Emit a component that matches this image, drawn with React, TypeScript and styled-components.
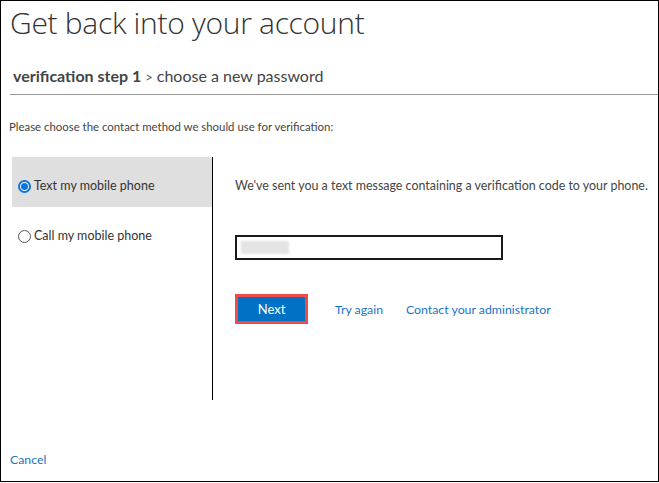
import React from "react";
import styled, { createGlobalStyle } from "styled-components";

const Global = createGlobalStyle`
  html, body { margin: 0; padding: 0; background: #fff; }
  body { font-family: Lato, "Open Sans", Arial, sans-serif; color: #333; }
`;

const Frame = styled.div`
  box-sizing: border-box;
  width: 659px;
  height: 482px;
  border: 1px solid #000;
  display: flex;
  flex-direction: column;
  background: #fff;
`;

const Title = styled.h1`
  margin: 2px 0 0 9px;
  font-family: "Open Sans", sans-serif;
  font-size: 30px;
  line-height: 40px;
  font-weight: 300;
  color: #333;
  letter-spacing: -0.3px;
`;

const StepLine = styled.div`
  margin: 23px 0 0 12px;
  font-size: 16px;
  line-height: 20px;
  color: #444;
`;

const StepStrong = styled.strong`
  font-weight: 700;
  color: #444;
`;

const Sep = styled.span`
  margin: 0 4px;
  font-size: 13px;
  color: #555;
`;

const Rule = styled.hr`
  margin: 7px 0 0 9px;
  border: 0;
  border-top: 1px solid #999;
  height: 0;
`;

const Instruction = styled.p`
  margin: 23px 0 0 8px;
  font-size: 11.4px;
  line-height: 18px;
  color: #444;
`;

const Body = styled.div`
  display: flex;
  margin: 21px 0 0 11px;
`;

const Options = styled.div`
  flex-shrink: 0;
  width: 200px;
  height: 243px;
  border-right: 1px solid #000;
  display: flex;
  flex-direction: column;
`;

const Option = styled.label<{ $active?: boolean }>`
  box-sizing: border-box;
  display: flex;
  align-items: center;
  align-self: stretch;
  gap: 3px;
  height: 50px;
  padding: 20px 0 12px 6px;
  background: ${(p) => (p.$active ? "#dfdfdf" : "transparent")};
  font-size: 12.5px;
  line-height: 18px;
  color: #333;
  cursor: pointer;
`;

const Radio = styled.span<{ $checked?: boolean }>`
  box-sizing: border-box;
  flex-shrink: 0;
  width: 13px;
  height: 13px;
  border-radius: 50%;
  border: ${(p) => (p.$checked ? "2px solid #0a74da" : "1px solid #555")};
  background: #fff;
  display: flex;
  align-items: center;
  justify-content: center;
  &::after {
    content: "";
    width: 7px;
    height: 7px;
    border-radius: 50%;
    background: ${(p) => (p.$checked ? "#0a74da" : "transparent")};
  }
`;

const Detail = styled.div`
  padding: 20px 0 0 22px;
  display: flex;
  flex-direction: column;
  align-items: flex-start;
`;

const Message = styled.p`
  margin: 0;
  font-size: 12.45px;
  line-height: 18px;
  color: #444;
  white-space: nowrap;
`;

const CodeBox = styled.div`
  box-sizing: border-box;
  margin-top: 40px;
  width: 268px;
  height: 25px;
  border: 2px solid #1a1a1a;
  padding: 4px 0 0 4px;
`;

const Blurred = styled.div`
  width: 48px;
  height: 13px;
  background: #e4e4e4;
  filter: blur(1px);
`;

const Actions = styled.div`
  margin-top: 34px;
  display: flex;
  align-items: center;
  gap: 23px;
`;

const PrimaryButton = styled.button`
  box-sizing: border-box;
  width: 73px;
  height: 30px;
  margin-right: 4px;
  border: 3px solid #f04a4a;
  background: #0072c6;
  color: #fff;
  font-family: inherit;
  font-size: 13px;
  font-weight: 400;
  padding: 0;
`;

const Link = styled.a`
  font-size: 12.3px;
  color: #1a73c9;
  text-decoration: none;
  cursor: pointer;
`;

const Footer = styled.div`
  margin: auto 0 14px 9px;
`;

export default function App() {
  return (
    <>
      <Global />
      <Frame>
        <Title>Get back into your account</Title>
        <StepLine>
          <StepStrong>verification step 1</StepStrong>
          <Sep>&gt;</Sep>
          choose a new password
        </StepLine>
        <Rule />
        <Instruction>Please choose the contact method we should use for verification:</Instruction>
        <Body>
          <Options>
            <Option $active>
              <Radio $checked />
              Text my mobile phone
            </Option>
            <Option>
              <Radio />
              Call my mobile phone
            </Option>
          </Options>
          <Detail>
            <Message>We've sent you a text message containing a verification code to your phone.</Message>
            <CodeBox>
              <Blurred />
            </CodeBox>
            <Actions>
              <PrimaryButton>Next</PrimaryButton>
              <Link>Try again</Link>
              <Link>Contact your administrator</Link>
            </Actions>
          </Detail>
        </Body>
        <Footer>
          <Link>Cancel</Link>
        </Footer>
      </Frame>
    </>
  );
}
